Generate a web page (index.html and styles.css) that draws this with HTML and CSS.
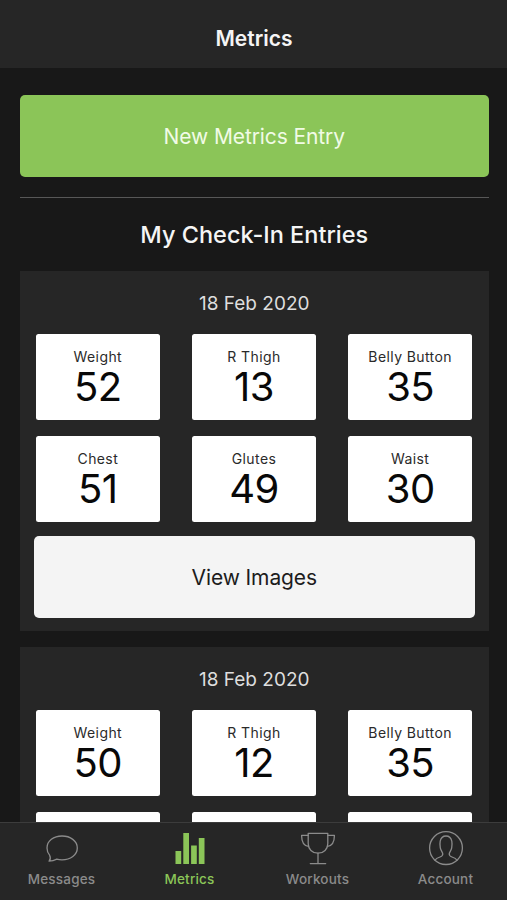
FILE: index.html
```html
<!DOCTYPE html>
<html lang="en">
<head>
    <meta charset="UTF-8">
    <meta name="viewport" content="width=device-width, initial-scale=1.0">
    <title>Metrics</title>
    <link rel="stylesheet" href="styles.css">
</head>
<body>
    <header class="header">
        <h1>Metrics</h1>
    </header>

    <main class="content">
        <button class="btn btn-primary">New Metrics Entry</button>
        <hr class="divider">
        <h2>My Check-In Entries</h2>

        <section class="entry">
            <h3 class="entry-date">18 Feb 2020</h3>
            <div class="metrics">
                <div class="metric"><span class="label">Weight</span><span class="value">52</span></div>
                <div class="metric"><span class="label">R Thigh</span><span class="value">13</span></div>
                <div class="metric"><span class="label">Belly Button</span><span class="value">35</span></div>
                <div class="metric"><span class="label">Chest</span><span class="value">51</span></div>
                <div class="metric"><span class="label">Glutes</span><span class="value">49</span></div>
                <div class="metric"><span class="label">Waist</span><span class="value">30</span></div>
            </div>
            <button class="btn btn-light">View Images</button>
        </section>

        <section class="entry">
            <h3 class="entry-date">18 Feb 2020</h3>
            <div class="metrics">
                <div class="metric"><span class="label">Weight</span><span class="value">50</span></div>
                <div class="metric"><span class="label">R Thigh</span><span class="value">12</span></div>
                <div class="metric"><span class="label">Belly Button</span><span class="value">35</span></div>
                <div class="metric"></div>
                <div class="metric"></div>
                <div class="metric"></div>
            </div>
        </section>
    </main>

    <!-- Bottom tab bar -->
    <nav class="tab-bar">
        <a class="tab">
            <svg class="icon" viewBox="0 0 36 36">
                <path d="M5.1 31.2c1.200-1.500 1.600-3.900.5-6C3.900 23.100 3 20.700 3 17.900 3 11 9.600 6 18 6s15.300 5 15.300 11.900S26.500 29.800 18 29.800c-1.900 0-3.600-.2-5.200-.7-2.200 1.200-4.800 2-7.700 2.100z"/>
            </svg>
            <span>Messages</span>
        </a>
        <a class="tab active">
            <svg class="icon icon-bars" viewBox="0 0 36 36">
                <rect x="3.500" y="21" width="5.700" height="13"/>
                <rect x="11.300" y="3" width="5.700" height="31"/>
                <rect x="19.100" y="15.500" width="5.700" height="18.500"/>
                <rect x="26.800" y="8" width="5.700" height="26"/>
            </svg>
            <span>Metrics</span>
        </a>
        <a class="tab">
            <svg class="icon" viewBox="0 0 36 36">
                <path d="M8.200 3.400h19.600v10.200c0 5.500-4 9.600-9.800 9.600s-9.800-4.100-9.800-9.600z"/>
                <path d="M8.200 5.400H1.600c0 6 1.800 10.300 7 11M27.800 5.400h6.600c0 6-1.800 10.300-7 11"/>
                <path d="M18 23.200v10.300M10.300 33.600h15.400"/>
            </svg>
            <span>Workouts</span>
        </a>
        <a class="tab">
            <svg class="icon" viewBox="0 0 36 36">
                <circle cx="18" cy="18.100" r="16.400"/>
                <path d="M7 30.200c1-1.800 2.500-2.400 5-3.200 2.700-.9 3-2 2.700-3.500-.3-1.300-2-3.200-2.400-5.700-.4-2.200-.5-4.500-.1-6.700C12.900 7.900 14.800 6 18 6s5.100 1.900 5.800 5.100c.4 2.200.3 4.500-.1 6.700-.4 2.500-2.100 4.400-2.400 5.700-.3 1.500 0 2.600 2.700 3.500 2.500.8 4 1.400 5 3.200"/>
            </svg>
            <span>Account</span>
        </a>
    </nav>
</body>
</html>
```
FILE: styles.css
```css
* {
    box-sizing: border-box;
}
body {
    display: flex;
    flex-direction: column;
    height: 100vh;
    margin: 0;
    overflow: hidden;
    background-color: #181818;
    color: #f5f5f5;
    font-family: Inter, sans-serif;
}
h1, h2, h3 {
    margin: 0;
    text-align: center;
}
.header {
    flex: none;
    height: 68px;
    padding: 22px 0 0 1px;
    background-color: #262626;
}
h1 {
    font-size: 21px;
    font-weight: 600;
    line-height: 33px;
}
.content {
    flex: 1;
    min-height: 0;
    padding: 27px 18.500px 0 20px;
    overflow: hidden;
}
.btn {
    display: block;
    width: 100%;
    height: 82px;
    padding: 0;
    border: none;
    border-radius: 5px;
    font-family: inherit;
    font-size: 21px;
    letter-spacing: -0.1px;
}
.btn-primary {
    background-color: #8bc558;
    color: #f1fbe6;
}
.btn-light {
    background-color: #f4f4f4;
    color: #1c1c1c;
}
.divider {
    height: 1px;
    margin: 20px 0 21px;
    border: none;
    background-color: #575757;
}
h2 {
    font-size: 23.500px;
    font-weight: 500;
    line-height: 32px;
}
.entry {
    margin: 20px 0 16px;
    padding: 16px 13.500px 13px;
    background-color: #262626;
}
.entry + .entry {
    margin-top: 0;
}
.entry-date {
    color: #dedede;
    font-size: 19px;
    font-weight: 400;
    line-height: 34px;
}
.metrics {
    display: grid;
    grid-template-columns: repeat(3, 1fr);
    gap: 16px 32.500px;
    padding: 13px 3px 14px 2.500px;
}
.metric {
    display: flex;
    flex-direction: column;
    align-items: center;
    height: 86px;
    padding-top: 14px;
    border-radius: 2.500px;
    background-color: #fff;
}
.label {
    color: #2a2a2a;
    font-size: 14px;
    letter-spacing: 0.4px;
    line-height: 18px;
}
.value {
    color: #080808;
    font-size: 40px;
    letter-spacing: -0.5px;
    line-height: 41px;
}
.tab-bar {
    display: flex;
    flex: none;
    height: 78px;
    margin: 0 -2.500px;
    border-top: 1px solid #3c3c3c;
    background-color: #262626;
}
.tab {
    display: flex;
    flex: 1;
    flex-direction: column;
    align-items: center;
    padding-top: 7px;
    color: #8b8b8b;
    font-size: 13.500px;
    font-weight: 500;
    letter-spacing: 0.2px;
    line-height: 18px;
}
.tab span {
    margin-top: 4px;
}
.tab.active {
    color: #8bc558;
}
.icon {
    width: 36px;
    height: 36px;
    fill: none;
    stroke: currentColor;
    stroke-width: 1.300;
    stroke-linecap: round;
    stroke-linejoin: round;
}
.icon-bars {
    fill: currentColor;
    stroke: none;
}
```
